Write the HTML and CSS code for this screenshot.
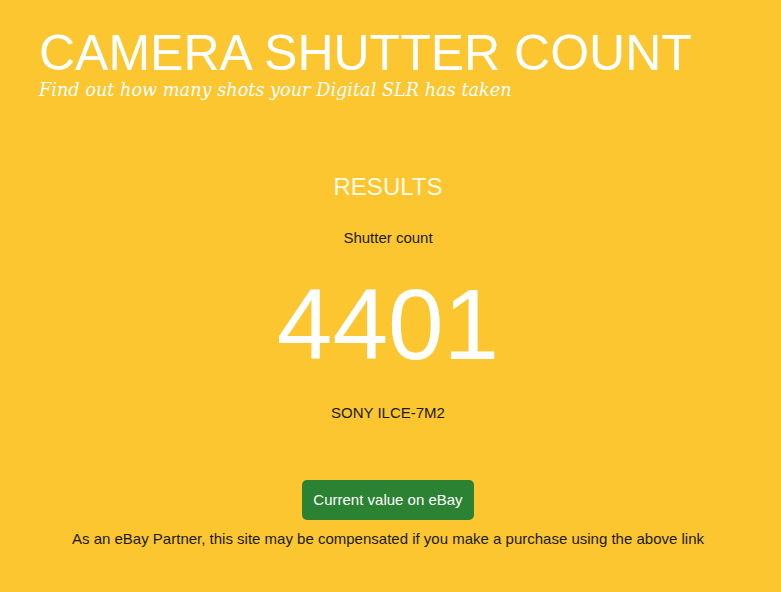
FILE: index.html
```html
<!DOCTYPE html>
<html>
<head>
<meta charset="utf-8">
<link rel="stylesheet" href="styles.css">
</head>
<body>
<header class="header">
  <h1 class="title">CAMERA SHUTTER COUNT</h1>
  <p class="tagline">Find out how many shots your Digital SLR has taken</p>
</header>
<main class="results">
  <h2 class="results-heading">RESULTS</h2>
  <p class="label">Shutter count</p>
  <p class="count">4401</p>
  <p class="model">SONY ILCE-7M2</p>
  <a class="ebay-button" href="#">Current value on eBay</a>
  <p class="disclaimer">As an eBay Partner, this site may be compensated if you make a purchase using the above link</p>
</main>
</body>
</html>
```
FILE: styles.css
```css
html, body {
  margin: 0;
  padding: 0;
  background: #fbc630;
  height: 100%;
}
body {
  font-family: "Liberation Sans", Arial, sans-serif;
  color: #1c1a14;
  overflow: hidden;
}
.header {
  padding: 25px 0 0 39px;
}
.title {
  margin: 0;
  font-weight: normal;
  font-size: 50px;
  line-height: 56px;
  color: #ffffff;
}
.tagline {
  margin: 0;
  font-family: "DejaVu Serif", Georgia, serif;
  font-style: italic;
  font-size: 17.7px;
  line-height: 18px;
  color: #ffffff;
}
.results {
  display: flex;
  flex-direction: column;
  align-items: center;
  padding-right: 5px;
  margin-top: 74px;
}
.results-heading {
  margin: 0;
  font-weight: normal;
  font-size: 24px;
  line-height: 28px;
  color: #fffbe6;
}
.label {
  margin: 28px 0 0;
  font-size: 15px;
  line-height: 18px;
}
.count {
  margin: 27px 0 0;
  font-size: 100px;
  line-height: 100px;
  color: #ffffff;
}
.model {
  margin: 30px 0 0;
  font-size: 15px;
  line-height: 18px;
}
.ebay-button {
  margin-top: 58px;
  display: block;
  width: 172px;
  height: 40px;
  line-height: 40px;
  text-align: center;
  background: #2a8232;
  color: #ffffff;
  text-decoration: none;
  border-radius: 5px;
  font-size: 15px;
}
.disclaimer {
  margin: 10px 0 0;
  font-size: 15px;
  line-height: 18px;
}
```
